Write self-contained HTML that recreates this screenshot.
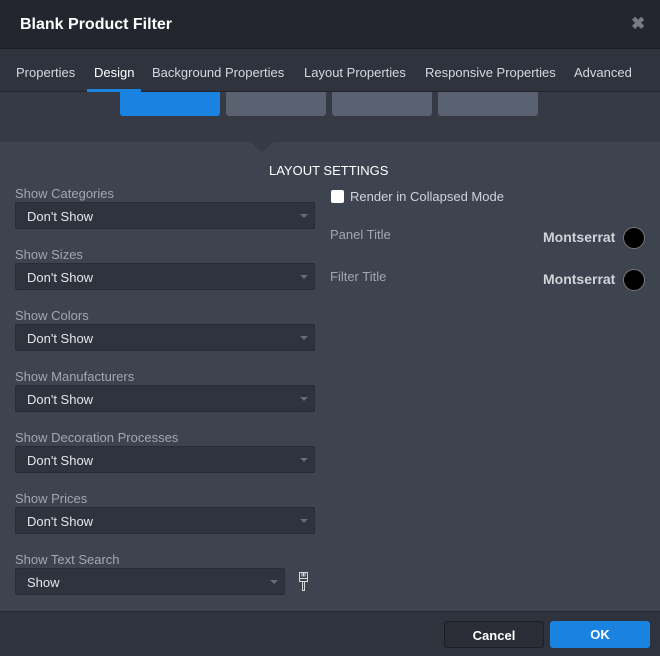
<!DOCTYPE html>
<html><head><style>
*{box-sizing:border-box;margin:0;padding:0}
body{width:660px;height:656px;background:#3e4350;font-family:"Liberation Sans",sans-serif;position:relative;overflow:hidden;font-size:13px}
.abs{position:absolute}
.hdr{left:0;top:0;width:660px;height:49px;background:#23262e;border-bottom:1px solid #1c1e24}
.hdr .t{left:20px;top:16px;color:#fff;font-weight:bold;font-size:16px}
.tabs{left:0;top:49px;width:660px;height:43px;background:#2f333d;border-bottom:1px solid #23262e}
.tab{top:16px;color:#d5d8de;font-size:13px}
.sw{top:92px;width:100px;height:24px;background:#5a6272;border-radius:0 0 3px 3px}
.lbl{left:15px;color:#a0a6b2;font-size:13px}
.sel{left:15px;width:300px;height:27px;background:#2f333d;border:1px solid #292c34;border-radius:2px;color:#e4e6ea;padding:6px 0 0 11px;font-size:13px}
.sel:after{content:"";position:absolute;right:6px;top:11px;border:4px solid transparent;border-top:4px solid #666c78}
.r{color:#a0a6b2}
.mont{color:#d0d3d8;font-weight:bold;font-size:14px}
.dot{width:22px;height:22px;border-radius:50%;background:#000;border:1px solid #777}
.btn{top:621px;height:27px;border-radius:3px;color:#fff;font-weight:bold;text-align:center;padding-top:6px;font-size:13px}
</style></head><body>
<div class="abs hdr"><div class="abs t">Blank Product Filter</div>
<div class="abs" style="left:631px;top:14px;color:#777b84;font-size:17px;font-weight:bold">✖</div></div>
<div class="abs tabs">
<div class="abs tab" style="left:16px">Properties</div>
<div class="abs tab" style="left:94px;color:#fff">Design</div>
<div class="abs tab" style="left:152px">Background Properties</div>
<div class="abs tab" style="left:304px">Layout Properties</div>
<div class="abs tab" style="left:425px">Responsive Properties</div>
<div class="abs tab" style="left:574px">Advanced</div>
<div class="abs" style="left:87px;top:40px;width:54px;height:3px;background:#1a83e2"></div>
</div>
<div class="abs" style="left:0;top:92px;width:660px;height:50px;background:#353a45"></div>
<div class="abs sw" style="left:120px;background:#1a83e2"></div>
<div class="abs sw" style="left:226px"></div>
<div class="abs sw" style="left:332px"></div>
<div class="abs sw" style="left:438px"></div>
<div class="abs" style="left:251px;top:142px;border-left:11px solid transparent;border-right:11px solid transparent;border-top:11px solid #353a45"></div>
<div class="abs" style="left:269px;top:163px;color:#fff;font-size:13px">LAYOUT SETTINGS</div>

<div class="abs lbl" style="top:186px">Show Categories</div><div class="abs sel" style="top:202px">Don't Show</div>
<div class="abs lbl" style="top:247px">Show Sizes</div><div class="abs sel" style="top:263px">Don't Show</div>
<div class="abs lbl" style="top:308px">Show Colors</div><div class="abs sel" style="top:324px">Don't Show</div>
<div class="abs lbl" style="top:369px">Show Manufacturers</div><div class="abs sel" style="top:385px">Don't Show</div>
<div class="abs lbl" style="top:430px">Show Decoration Processes</div><div class="abs sel" style="top:446px">Don't Show</div>
<div class="abs lbl" style="top:491px">Show Prices</div><div class="abs sel" style="top:507px">Don't Show</div>
<div class="abs lbl" style="top:552px">Show Text Search</div><div class="abs sel" style="top:568px;width:270px">Show</div>
<svg class="abs" style="left:297px;top:571px" width="14" height="21" viewBox="0 0 14 21"><path d="M2.5 1.5h8v9h-8z M5 1.5v4 M6.5 1.5v4 M8 1.5v4 M2.5 7.5h8 M5.5 10.5v9h2v-9" fill="none" stroke="#d8d8d8" stroke-width="1"/></svg>

<div class="abs" style="left:331px;top:190px;width:13px;height:13px;background:#fff;border-radius:2px"></div>
<div class="abs" style="left:350px;top:189px;color:#d0d3d8">Render in Collapsed Mode</div>
<div class="abs r" style="left:330px;top:227px">Panel Title</div>
<div class="abs mont" style="left:543px;top:229px">Montserrat</div>
<div class="abs dot" style="left:623px;top:227px"></div>
<div class="abs r" style="left:330px;top:269px">Filter Title</div>
<div class="abs mont" style="left:543px;top:271px">Montserrat</div>
<div class="abs dot" style="left:623px;top:269px"></div>

<div class="abs" style="left:0;top:611px;width:660px;height:45px;background:#2f333d;border-top:1px solid #252830"></div>
<div class="abs btn" style="left:444px;width:100px;background:#2a2d35;border:1px solid #1d1f25">Cancel</div>
<div class="abs btn" style="left:550px;width:100px;background:#1a83e2">OK</div>
</body></html>
